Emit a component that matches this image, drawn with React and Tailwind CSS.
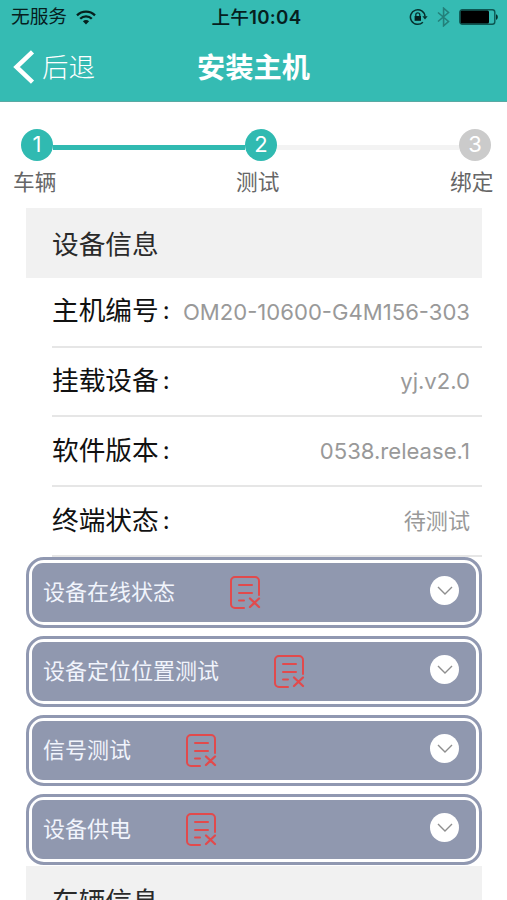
import React, { useState } from 'react';

const deviceInfo = [
  { label: '主机编号', value: 'OM20-10600-G4M156-303' },
  { label: '挂载设备', value: 'yj.v2.0' },
  { label: '软件版本', value: '0538.release.1' },
  { label: '终端状态', value: '待测试' },
];

const tests = ['设备在线状态', '设备定位位置测试', '信号测试', '设备供电'];

const WifiIcon = () => (
  <svg className="ml-[9px] h-[15px] w-5" viewBox="0 0 20 15" fill="none" stroke="#06201e" strokeWidth="2.3">
    <path d="M1 5.4a12.8 12.8 0 0 1 18 0" />
    <path d="M4.2 8.7a8.2 8.2 0 0 1 11.6 0" />
    <path d="M6.9 11.3a4.4 4.4 0 0 1 6.2 0L10 14.4z" fill="#06201e" stroke="none" />
  </svg>
);

const RotationLockIcon = () => (
  <svg className="h-[18px] w-[19px]" viewBox="0 0 19 18" fill="none" stroke="#06302d" strokeWidth="1.5">
    <path d="M13.9 14.2A7.3 7.3 0 1 1 16 8.5" />
    <path d="M13.4 8.2h5.2L16 11.4z" fill="#06302d" stroke="none" />
    <rect x="5.6" y="8" width="6.4" height="4.8" fill="#06201e" stroke="none" />
    <path d="M6.8 8.4V6.8a2 2 0 0 1 4 0v1.6" strokeWidth="1.3" />
  </svg>
);

const BluetoothIcon = () => (
  <svg className="ml-[9px] h-5 w-[13px]" viewBox="0 0 13 20" fill="none" stroke="#23807a" strokeWidth="1.6">
    <path d="M1 5.5l10.5 9L6.6 18.8V1.2l4.9 4.3L1 14.5" />
  </svg>
);

const BatteryIcon = () => (
  <svg className="ml-[9px] h-4 w-10" viewBox="0 0 40 16">
    <rect x="0.8" y="0.8" width="35" height="14.4" rx="2.5" fill="none" stroke="#0d5752" strokeWidth="1.4" />
    <rect x="1.5" y="1.5" width="28.5" height="13" rx="1.5" fill="#000" />
    <path d="M37 5.2c2.4.6 2.4 5 0 5.6z" fill="#06302d" />
  </svg>
);

const ReportFailedIcon = () => (
  <svg
    className="h-[34px] w-[31px]"
    viewBox="0 0 31 34"
    fill="none"
    stroke="#e24a4c"
    strokeWidth="2"
    strokeLinecap="round"
  >
    <path d="M14 32H5a4 4 0 0 1-4-4V5a4 4 0 0 1 4-4h20a4 4 0 0 1 4 4v14" />
    <path d="M9 9h13M9 17h13M9 24.500h5" />
    <path d="M20 22.500l9 8.500M29 22.500l-9 8.500" strokeWidth="2.3" />
  </svg>
);

const Step = ({ number, active }) => (
  <div
    className={`flex h-8 w-8 shrink-0 items-center justify-center rounded-full pb-0.5 text-[22px] leading-none text-white ${active ? 'bg-[#30bab1]' : 'bg-[#cbcbcb]'}`}
  >
    {number}
  </div>
);

const SectionTitle = ({ children }) => (
  <h2 className="flex h-[70px] items-center bg-[#f1f1f1] pl-[26px] pt-0.5 text-[26.7px] leading-none text-[#2a2a2a]">
    {children}
  </h2>
);

const InfoRow = ({ label, value }) => (
  <div className="ml-[26px] flex h-[69.7px] items-center justify-between border-b-2 border-[#e6e6e6] pr-3">
    <span className="flex whitespace-nowrap pb-0.5 text-[26.7px] leading-none text-[#111]">
      {label}
      <span className="ml-1 w-2 pt-0.5 font-['Inter'] text-[24px]">:</span>
    </span>
    <span className="whitespace-nowrap text-[22.1px] leading-none text-[#999]">{value}</span>
  </div>
);

const TestCard = ({ title, open, onToggle }) => (
  <div className="h-[71px] rounded-[18px] border-[3px] border-[#9098b1] p-[3px]">
    <button onClick={onToggle} className="flex h-full w-full items-center rounded-[11px] bg-[#9098af] pl-[11px] pr-[17px]">
      <span className="whitespace-nowrap text-[22px] leading-none text-[#f1f4fc]">{title}</span>
      <span className="ml-[55px] mt-0.5">
        <ReportFailedIcon />
      </span>
      <span className="mb-1 ml-auto flex h-[29px] w-[29px] items-center justify-center rounded-full bg-white">
        <svg
          className={`h-[9px] w-4 ${open ? 'rotate-180' : ''}`}
          viewBox="0 0 16 9"
          fill="none"
          stroke="#8e8e8e"
          strokeWidth="1.4"
        >
          <path d="M1 1l7 7 7-7" />
        </svg>
      </span>
    </button>
  </div>
);

function App() {
  const [openTest, setOpenTest] = useState(null);

  return (
    <div className="h-[900px] w-[507px] overflow-hidden bg-white font-['Inter','Noto_Sans_CJK_SC',sans-serif]">
      <header className="h-[102px] border-b border-[#5aa9a3] bg-[#35bbb3]">
        {/* Status bar */}
        <div className="grid h-[34px] grid-cols-[1fr_auto_1fr] items-center pl-[11px] pr-2 text-[#06201e]">
          <div className="flex items-center pt-px">
            <span className="text-[18.7px] leading-none">无服务</span>
            <WifiIcon />
          </div>
          <span className="pl-[3px] pt-0.5 text-[18.7px] font-medium leading-none">
            上午<span className="font-semibold tracking-[0.3px]">10:04</span>
          </span>
          <div className="flex items-center justify-end">
            <RotationLockIcon />
            <BluetoothIcon />
            <BatteryIcon />
          </div>
        </div>

        {/* Navigation bar */}
        <div className="grid h-[66px] grid-cols-[1fr_auto_1fr] items-center px-[13px] text-white">
          <button className="flex items-center">
            <svg className="h-[34px] w-[22px]" viewBox="0 0 22 34" fill="none" stroke="currentColor" strokeWidth="4.5">
              <path d="M19.500 1.800L3.500 17l16 15.200" />
            </svg>
            <span className="ml-[7px] text-[26.5px] font-light leading-none">后退</span>
          </button>
          <h1 className="pt-0.5 text-[28.2px] font-bold leading-none">安装主机</h1>
        </div>
      </header>

      {/* Progress steps */}
      <div className="h-[106px] pt-[27px]">
        <div className="flex items-center pl-[21px] pr-4">
          <Step number={1} active />
          <div className="mt-1 h-[5px] w-[192px] bg-[#30bab1]" />
          <Step number={2} active />
          <div className="mt-1 h-[5px] flex-1 bg-[#f3f3f3]" />
          <Step number={3} />
        </div>
        <div className="mt-[11px] flex pl-[13px] text-[21.7px] leading-none text-[#666]">
          <span className="w-[223px]">车辆</span>
          <span className="w-[214px]">测试</span>
          <span>绑定</span>
        </div>
      </div>

      <main className="pl-[26px] pr-[25px]">
        <SectionTitle>设备信息</SectionTitle>
        {deviceInfo.map((item) => (
          <InfoRow key={item.label} label={item.label} value={item.value} />
        ))}
        <div className="mb-px flex flex-col gap-2">
          {tests.map((title, i) => (
            <TestCard
              key={title}
              title={title}
              open={openTest === i}
              onToggle={() => setOpenTest(openTest === i ? null : i)}
            />
          ))}
        </div>
        <SectionTitle>车辆信息</SectionTitle>
      </main>
    </div>
  );
}

export default App;
